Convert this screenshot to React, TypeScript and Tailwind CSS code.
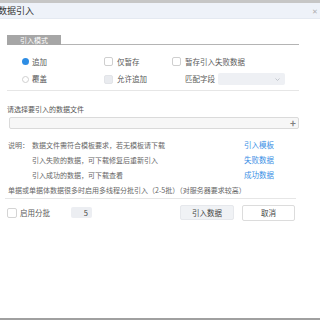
export default function App() {
  return (
    <div className="flex h-[320px] w-[320px] flex-col overflow-hidden bg-white font-['Noto_Sans_CJK_SC','Noto_Sans',sans-serif] text-[7px] leading-[10px] text-[#5a5a5a]">
      <div className="h-[3px] shrink-0 bg-[#c6c6c6]" />
      {/* title bar */}
      <div className="flex h-[16px] shrink-0 items-center justify-between border-b border-[#e4e9f1] bg-[#eef2f9]">
        <span className="-ml-[2px] text-[9px] text-[#333]">数据引入</span>
        <span className="mr-[2px] text-[7px] text-[#b0b0b0]">✕</span>
      </div>

      <div className="flex flex-1 flex-col px-[7px]">
        {/* tab header */}
        <div className="mr-[14px] mt-[16px] flex items-end">
          <div className="flex h-[10px] w-[54px] items-center justify-center bg-[#a6a6a6] text-[7px] text-white">
            引入模式
          </div>
          <div className="flex-1 border-b border-[#b4b4b4]" />
        </div>

        {/* options */}
        <div className="mr-[14px] mt-[8px] grid grid-cols-[82px_68px_1fr] grid-rows-[17px_18px] border-b border-[#e6e6e6] pb-[2px] pl-[15px] text-[7.5px]">
          <div className="flex items-center gap-[3px]">
            <span className="h-[7px] w-[7px] rounded-full bg-[#2e8de4]" />
            <span>追加</span>
          </div>
          <div className="flex items-center gap-[4px]">
            <span className="h-[9px] w-[9px] rounded-[2px] border border-[#cfcfcf] bg-white" />
            <span>仅暂存</span>
          </div>
          <div className="flex items-center gap-[4px]">
            <span className="h-[9px] w-[9px] rounded-[2px] border border-[#cfcfcf] bg-white" />
            <span>暂存引入失败数据</span>
          </div>

          <div className="flex items-center gap-[3px]">
            <span className="h-[7px] w-[7px] rounded-full border border-[#cfcfcf] bg-white" />
            <span>覆盖</span>
          </div>
          <div className="flex items-center gap-[4px]">
            <span className="h-[9px] w-[9px] rounded-[2px] border border-[#e2e4e8] bg-[#e9ebef]" />
            <span>允许追加</span>
          </div>
          <div className="flex items-center pl-[13px]">
            <span>匹配字段</span>
            <div className="ml-[3px] flex h-[12px] w-[67px] items-center justify-end rounded-[2px] bg-[#eef0f4] pr-[5px]">
              <svg width="5" height="3" viewBox="0 0 5 3">
                <path d="M0.5 0.5 L2.5 2.5 L4.5 0.5" fill="none" stroke="#b8bcc4" strokeWidth="0.8" />
              </svg>
            </div>
          </div>
        </div>

        {/* file select */}
        <div className="mt-[13px] text-[#555]">请选择要引入的数据文件</div>
        <div className="ml-[2px] mr-[14px] mt-[3px] flex h-[12px] items-center justify-end rounded-[2px] border border-[#dadada] bg-[#f7f7f7] pr-[2px]">
          <span className="text-[10px] font-bold leading-[10px] text-[#808080]">+</span>
        </div>

        {/* notes */}
        <div className="ml-[1px] mt-[8px] grid grid-cols-[24px_212px_auto] auto-rows-[15px] items-center text-[#666]">
          <span>说明：</span>
          <span>数据文件需符合模板要求，若无模板请下载</span>
          <span className="text-[7.5px] text-[#3b8fe5]">引入模板</span>

          <span />
          <span>引入失败的数据，可下载修复后重新引入</span>
          <span className="text-[7.5px] text-[#3b8fe5]">失败数据</span>

          <span />
          <span>引入成功的数据，可下载查看</span>
          <span className="text-[7.5px] text-[#3b8fe5]">成功数据</span>

          <span className="col-span-3">单据或单据体数据很多时启用多线程分批引入（2-5批）（对服务器要求较高）</span>
        </div>
        <div className="-ml-[2px] mr-[17px] mt-[1px] border-b border-[#e6e6e6]" />

        {/* footer */}
        <div className="mr-[18px] mt-[5px] flex h-[17px] items-center text-[7.5px]">
          <span className="h-[10px] w-[10px] rounded-[2px] border border-[#d4d4d4] bg-white" />
          <span className="ml-[3px]">启用分批</span>
          <div className="ml-[21px] flex h-[11px] w-[21px] items-center justify-end rounded-[2px] bg-[#eceef2] pr-[4px] text-[#444]">
            5
          </div>
          <div className="ml-auto flex h-[15px] w-[54px] items-center justify-center rounded-[2px] border border-[#e6e8ec] bg-[#f0f2f5] text-[#444]">
            引入数据
          </div>
          <div className="ml-[8px] flex h-[16px] w-[53px] items-center justify-center rounded-[2px] border border-[#dcdcdc] bg-white text-[#444]">
            取消
          </div>
        </div>
      </div>

      <div className="h-[2px] shrink-0 bg-[#a0a0a0]" />
    </div>
  );
}
